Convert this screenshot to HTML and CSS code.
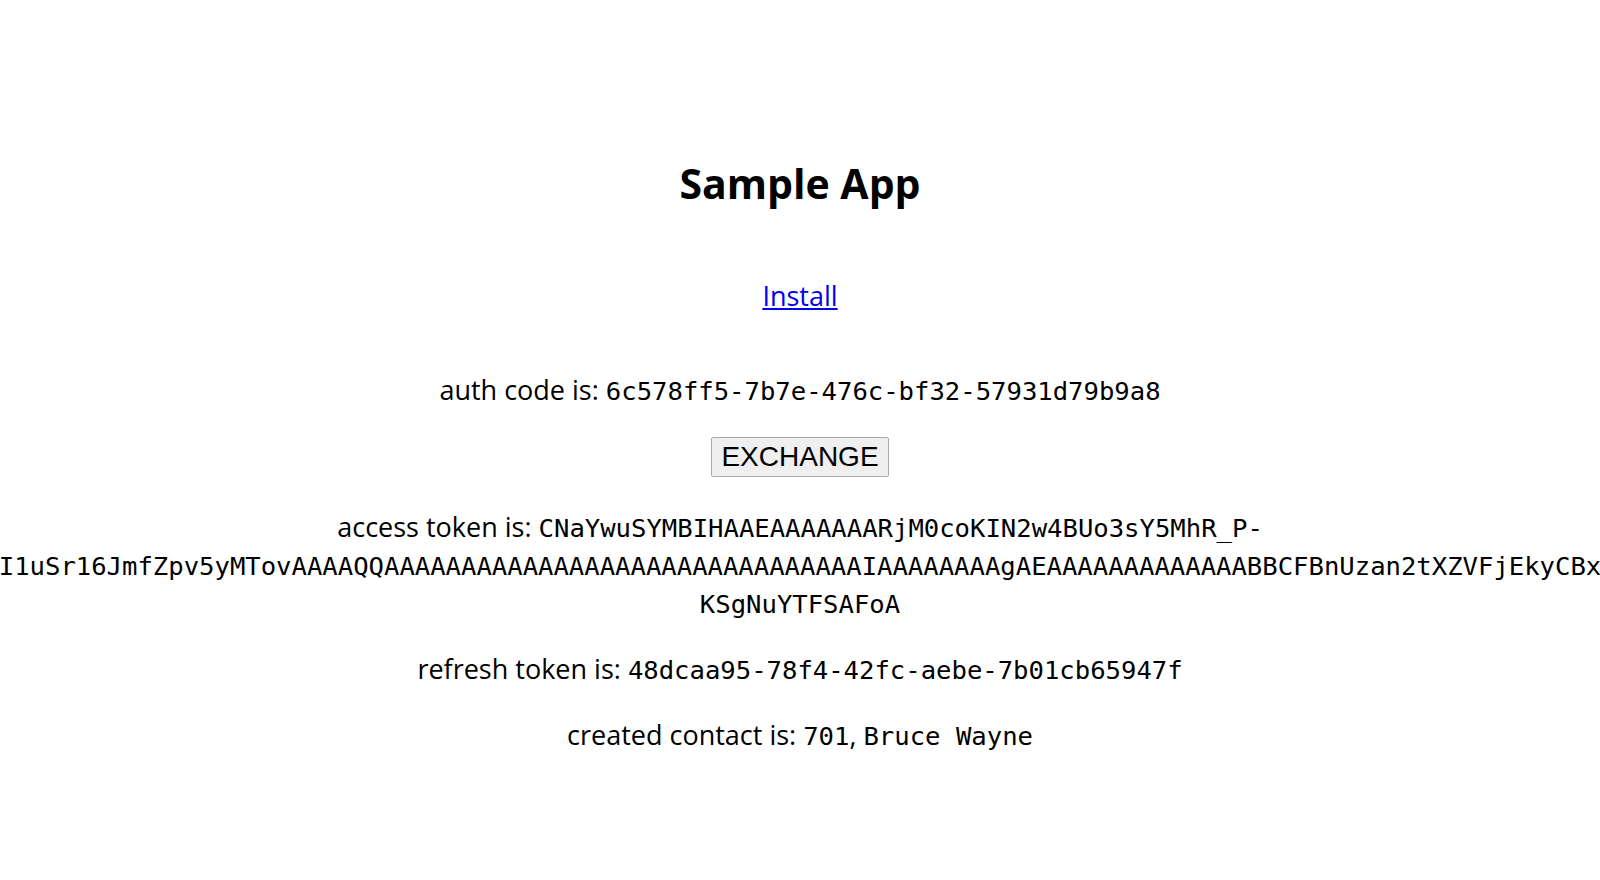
FILE: index.html
```html
<!DOCTYPE html>
<html lang="en">
<head>
<meta charset="utf-8">
<title>Sample App</title>
<link rel="stylesheet" href="styles.css">
</head>
<body>
<main class="app">
  <h1 class="title">Sample App</h1>
  <p class="line install"><a class="install-link" href="#">Install</a></p>
  <p class="line auth">auth code is: <code class="val">6c578ff5-7b7e-476c-bf32-57931d79b9a8</code></p>
  <button class="exchange" type="button">EXCHANGE</button>
  <p class="line">access token is: <code class="val">CNaYwuSYMBIHAAEAAAAAAARjM0coKIN2w4BUo3sY5MhR_P-I1uSr16JmfZpv5yMTovAAAAQQAAAAAAAAAAAAAAAAAAAAAAAAAAAAAAAIAAAAAAAAgAEAAAAAAAAAAAAABBCFBnUzan2tXZVFjEkyCBx<wbr>KSgNuYTFSAFoA</code></p>
  <p class="line">refresh token is: <code class="val">48dcaa95-78f4-42fc-aebe-7b01cb65947f</code></p>
  <p class="line">created contact is: <code class="val">701</code>, <code class="val">Bruce Wayne</code></p>
</main>
</body>
</html>
```

FILE: styles.css
```css
html {
  overflow: hidden;
  background: #ffffff;
}

body {
  margin: 0;
  color: #000000;
  font-family: "Open Sans", "Noto Sans", sans-serif;
  font-size: 27px;
}

.app {
  display: flex;
  flex-direction: column;
  align-items: center;
  gap: 28px;
  padding-top: 155px;
  text-align: center;
}

.title {
  margin: 0 0 38px;
  font-size: 41px;
  font-weight: 700;
  line-height: 56px;
}

.line {
  margin: 0;
  line-height: 38px;
}

.install {
  margin-bottom: 28px;
}

.install-link {
  color: #0000ee;
  text-decoration: underline;
}

.val {
  font-family: "DejaVu Sans Mono", monospace;
  font-size: 25.6px;
  line-height: 1;
}

.exchange {
  margin: 0 0 3px;
  padding: 3px 9px;
  font-family: "Liberation Sans", Arial, sans-serif;
  font-size: 28px;
  line-height: 32px;
  color: #000000;
  background: #efefef;
  border: 1px solid #a9a9a9;
  border-radius: 2px;
}
```
